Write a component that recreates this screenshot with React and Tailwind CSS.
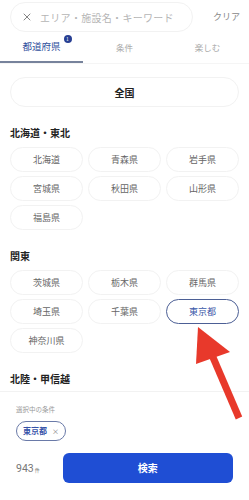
import { X } from 'lucide-react';

const font = { fontFamily: '"Noto Sans CJK JP", "Noto Sans", sans-serif' };

const Chip = ({ label, active }) => (
  <div
    className={`h-[25px] rounded-full border flex items-center justify-center text-[9px] ${
      active ? 'border-[#4c5f95] text-[#3a58a8]' : 'border-[#f2f2f2] text-[#666]'
    }`}
  >
    {label}
  </div>
);

const Region = ({ title, items, selected }) => (
  <section className="mt-[19px]">
    <h3 className="text-[10px] leading-[14px] font-bold text-[#222] mb-[7px]">{title}</h3>
    {items && (
      <div className="grid grid-cols-3 gap-x-[5px] gap-y-[4px]">
        {items.map((p) => (
          <Chip key={p} label={p} active={p === selected} />
        ))}
      </div>
    )}
  </section>
);

export default function App() {
  return (
    <div className="relative w-[249px] h-[500px] bg-white overflow-hidden" style={font}>
      {/* search bar */}
      <div className="flex items-center pt-[2px] pl-[10px]">
        <div className="w-[183px] h-[30px] rounded-full border border-[#f2f2f2] flex items-center pl-[10px] gap-[7px]">
          <X size={12} strokeWidth={1.6} className="text-[#666]" />
          <span className="text-[10px] text-[#b5b5b5] tracking-[0.3px]">エリア・施設名・キーワード</span>
        </div>
        <span className="ml-auto mr-[9px] text-[9px] text-[#888]">クリア</span>
      </div>

      {/* tabs */}
      <div className="grid grid-cols-3 h-[32px] border-b border-[#f5f5f5]">
        <div className="relative flex items-center justify-center border-b-2 border-[#77839c]">
          <span className="relative text-[9.5px] text-[#2f4f9c]">
            都道府県
            <span className="absolute -right-[11px] -top-[4px] w-[8px] h-[8px] rounded-full bg-[#283f93] text-white text-[5px] leading-[8px] text-center">
              1
            </span>
          </span>
        </div>
        <div className="flex items-center justify-center text-[8.5px] text-[#aaa]">条件</div>
        <div className="flex items-center justify-center text-[8.5px] text-[#aaa]">楽しむ</div>
      </div>

      <div className="px-[10px]">
        <div className="mt-[13px] h-[30px] rounded-full border border-[#f2f2f2] flex items-center justify-center text-[10px] font-bold text-[#222]">
          全国
        </div>

        <Region
          title="北海道・東北"
          items={['北海道', '青森県', '岩手県', '宮城県', '秋田県', '山形県', '福島県']}
        />
        <Region
          title="関東"
          items={['茨城県', '栃木県', '群馬県', '埼玉県', '千葉県', '東京都', '神奈川県']}
          selected="東京都"
        />
        <Region title="北陸・甲信越" />
      </div>

      {/* bottom panel */}
      <div className="absolute left-0 right-0 top-[391px] bottom-0 bg-white border-t border-[#f2f2f2] px-[16px]">
        <p className="mt-[13px] text-[6.5px] text-[#999]">選択中の条件</p>
        <div className="mt-[5px] inline-flex items-center h-[20px] px-[6px] gap-[5px] rounded-full border border-[#6a7aa8]">
          <span className="text-[8px] font-bold text-[#3552a8]">東京都</span>
          <span className="text-[7px] text-[#777]">×</span>
        </div>
        <div className="mt-[12px] flex items-center">
          <div className="w-[48px] flex items-baseline text-[#777] pt-[2px]">
            <span className="text-[10.5px]" style={{ fontFamily: '"Roboto", "Noto Sans", sans-serif' }}>943</span>
            <span className="text-[5px] ml-[1px]">件</span>
          </div>
          <button className="w-[175px] h-[30px] rounded-[6px] bg-[#1f4ed4] text-white text-[10px] font-bold">
            検索
          </button>
        </div>
      </div>

      {/* annotation arrow */}
      <svg className="absolute left-0 top-0 pointer-events-none" width="249" height="500">
        <polygon points="198,327 196,364 230,352" fill="#e8392b" />
        <line x1="212" y1="355" x2="239" y2="418" stroke="#e8392b" strokeWidth="7" />
      </svg>
    </div>
  );
}
